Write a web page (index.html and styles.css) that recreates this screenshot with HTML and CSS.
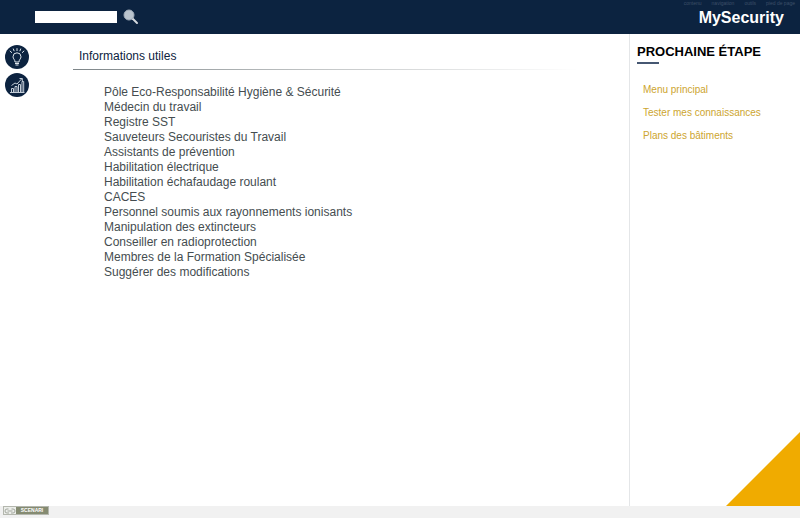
FILE: index.html
```html
<!DOCTYPE html>
<html lang="fr">
<head>
    <meta charset="UTF-8">
    <meta name="viewport" content="width=device-width, initial-scale=1.0">
    <title>Informations utiles - MySecurity</title>
    <link rel="stylesheet" href="styles.css">
</head>
<body>
    <header class="header">
        <form class="search" role="search">
            <input class="search-input" type="text" aria-label="Rechercher">
            <button class="search-button" type="submit" aria-label="Lancer la recherche">
                <svg width="16" height="16" viewBox="0 0 16 16">
                    <path d="M9.5 9.5 L14 14" stroke="#d5d9de" stroke-width="2" stroke-linecap="round"/>
                    <circle cx="6" cy="6" r="5" fill="#b9c3cd" stroke="#a0abb8"/>
                </svg>
            </button>
        </form>
        <div class="brand">
            <nav class="shortcuts" aria-label="Accès rapide">
                <a href="#contenu">contenu</a>
                <a href="#navigation">navigation</a>
                <a href="#outils">outils</a>
                <a href="#footer">pied de page</a>
            </nav>
            <div class="brand-name">MySecurity</div>
        </div>
    </header>

    <div class="page">
        <aside class="tools" id="outils">
            <a class="tool" href="#conseils" aria-label="Conseils">
                <svg width="24" height="24" viewBox="0 0 24 24" fill="none" stroke="#dfe6ec">
                    <path d="M10 17 C10 14.5 8 13.8 8 11.8 A4 4 0 0 1 16 11.8 C16 13.8 14 14.5 14 17 Z"/>
                    <path d="M10 18.5 H14 M10.5 20 H13.5"/>
                    <path d="M12 6 V3.2 M9.2 6.2 L8.2 3.6 M14.8 6.2 L15.8 3.6 M7 7.8 L4.8 5.8 M17 7.8 L19.2 5.8"/>
                </svg>
            </a>
            <a class="tool" href="#resultats" aria-label="Résultats">
                <svg width="24" height="24" viewBox="0 0 24 24" fill="none" stroke="#c3cdd8">
                    <path d="M5 19.5 H19.5 M6.5 19 V15.5 H8.5 V19 M10 19 V13.5 H12 V19 M13.5 19 V11.5 H15.5 V19 M17 19 V8.5 H18.7 V19"/>
                    <path d="M6.5 12.5 L10 10 L12 11 L17 5.5 M14.5 5.5 H17.3 V8"/>
                </svg>
            </a>
        </aside>

        <main class="content" id="contenu">
            <h1 class="content-title">Informations utiles</h1>
            <ul class="info-list">
                <li><a href="#">Pôle Eco-Responsabilité Hygiène &amp; Sécurité</a></li>
                <li><a href="#">Médecin du travail</a></li>
                <li><a href="#">Registre SST</a></li>
                <li><a href="#">Sauveteurs Secouristes du Travail</a></li>
                <li><a href="#">Assistants de prévention</a></li>
                <li><a href="#">Habilitation électrique</a></li>
                <li><a href="#">Habilitation échafaudage roulant</a></li>
                <li><a href="#">CACES</a></li>
                <li><a href="#">Personnel soumis aux rayonnements ionisants</a></li>
                <li><a href="#">Manipulation des extincteurs</a></li>
                <li><a href="#">Conseiller en radioprotection</a></li>
                <li><a href="#">Membres de la Formation Spécialisée</a></li>
                <li><a href="#">Suggérer des modifications</a></li>
            </ul>
        </main>

        <nav class="next" id="navigation">
            <h2 class="next-title">PROCHAINE ÉTAPE</h2>
            <ul class="next-list">
                <li><a href="#">Menu principal</a></li>
                <li><a href="#">Tester mes connaissances</a></li>
                <li><a href="#">Plans des bâtiments</a></li>
            </ul>
            <div class="corner"></div>
        </nav>
    </div>

    <footer class="footer" id="footer">
        <a class="scenari" href="#">
            <span class="scenari-logo">
                <svg width="12" height="6" viewBox="0 0 12 6" fill="none" stroke="#a3a79e">
                    <path d="M4.5 1 H3 A2 2 0 0 0 3 5 H5 M7.5 1 H9 A2 2 0 0 1 9 5 H7 M3.5 3 H8.5"/>
                </svg>
            </span>
            <span class="scenari-name">SCENARI</span>
        </a>
    </footer>
</body>
</html>
```

FILE: styles.css
```css
* {
    box-sizing: border-box;
}
body {
    display: flex;
    flex-direction: column;
    min-height: 100vh;
    margin: 0;
    background: #fff;
    font-family: "Liberation Sans", Arial, sans-serif;
    font-size: 12px;
    line-height: 15px;
}
a {
    color: inherit;
    text-decoration: none;
}
a:hover {
    text-decoration: underline;
}
ul {
    list-style: none;
    margin: 0;
    padding: 0;
}

/* Header */
.header {
    display: flex;
    justify-content: space-between;
    height: 34px;
    padding: 0 16px 0 35px;
    background: #0c2340;
}
.search {
    display: flex;
    align-items: center;
    gap: 6px;
    padding-bottom: 1px;
}
.search-input {
    width: 82px;
    height: 12px;
    padding: 0 2px;
    border: 0;
    background: #fff;
    font-size: 10px;
}
.search-button {
    padding: 0;
    border: 0;
    background: none;
    cursor: pointer;
}
.search-button svg {
    display: block;
}
.brand {
    color: #fff;
    text-align: right;
}
.shortcuts {
    display: flex;
    justify-content: flex-end;
    gap: 10px;
    height: 6px;
    margin-right: -11px;
    color: #3d4f68;
    font-size: 5px;
    line-height: 6px;
}
.brand-name {
    font-size: 16px;
    font-weight: bold;
    line-height: 24px;
}

/* Page */
.page {
    display: flex;
    flex: 1;
}
.tools {
    display: flex;
    flex-direction: column;
    gap: 4px;
    width: 73px;
    padding: 11px 5px;
}
.tool {
    width: 24px;
    height: 24px;
    border-radius: 50%;
    background: #0c2340;
}
.tool svg {
    display: block;
}
.content {
    flex: 1;
    padding-right: 52px;
}
.content-title {
    margin: 0;
    padding: 15px 6px 5px;
    border-bottom: 1px solid;
    border-image: linear-gradient(to right, #7d8588, #c4c7c8 50%, #fff) 1;
    color: #0c2340;
    font-size: 12px;
    font-weight: normal;
}
.info-list {
    padding: 15px 0 0 31px;
    color: #454d50;
}

/* Next step */
.next {
    display: flex;
    flex-direction: column;
    width: 171px;
    border-left: 1px solid #e4e6e8;
}
.next-title {
    margin: 10px 0 0 7px;
    color: #000;
    font-size: 13px;
    line-height: 16px;
}
.next-title::after {
    content: "";
    display: block;
    width: 22px;
    height: 2px;
    margin-top: 2px;
    background: #465772;
}
.next-list {
    display: flex;
    flex-direction: column;
    gap: 8px;
    padding: 18px 0 0 13px;
    color: #cda52f;
    font-size: 10px;
}
.corner {
    width: 74px;
    height: 74px;
    margin: auto 0 0 auto;
    background: #f0ab00;
    clip-path: polygon(100% 0, 100% 100%, 0 100%);
}

/* Footer */
.footer {
    height: 12px;
    padding: 0 3px;
    background: #f1f1f1;
}
.scenari {
    display: flex;
    width: 46px;
    height: 9px;
    border: 1px solid #b4b7ae;
    background: #858b72;
}
.scenari-logo {
    display: flex;
    align-items: center;
    width: 12px;
    background: #eceeea;
}
.scenari-name {
    flex: 1;
    color: #fff;
    font-size: 5px;
    font-weight: bold;
    line-height: 7px;
    text-align: center;
}
```
